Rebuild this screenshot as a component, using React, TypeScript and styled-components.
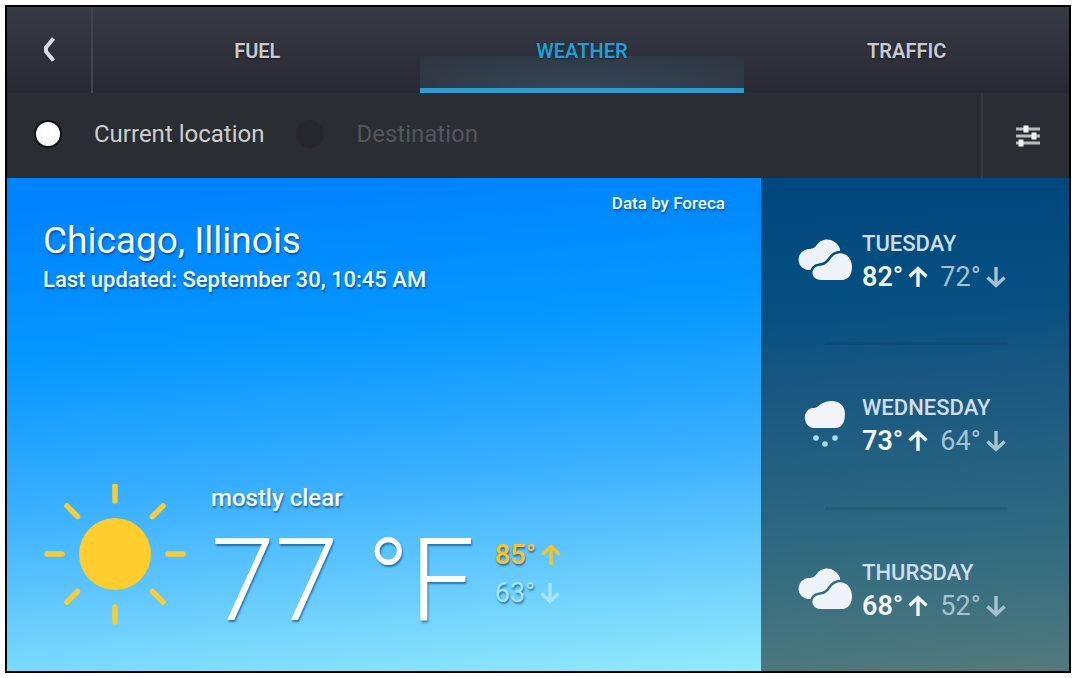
import React from "react";
import styled, { createGlobalStyle } from "styled-components";

const GlobalStyle = createGlobalStyle`
  *, *::before, *::after { box-sizing: border-box; }
  body {
    margin: 0;
    background: #fff;
    font-family: Roboto, "Liberation Sans", sans-serif;
  }
  h1, h2, p, ul { margin: 0; padding: 0; font-weight: inherit; }
  button { font: inherit; border: 0; padding: 0; background: none; cursor: pointer; }
`;

const Page = styled.div`
  display: flex;
  min-height: 100vh;
  padding: 5px 7px 5px 5px;
`;

const Screen = styled.div`
  flex: 1;
  display: flex;
  flex-direction: column;
  border: 2px solid #000;
  background: #2a2d31;
`;

const TopBar = styled.header`
  display: flex;
  height: 86px;
  background: linear-gradient(#363a44, #2c2d38 75%, #272932);
`;

const BackButton = styled.button`
  width: 86px;
  display: grid;
  place-items: center;
  border-right: 2px solid #42444e;
`;

const Tabs = styled.nav`
  flex: 1;
  display: grid;
  grid-template-columns: repeat(3, 1fr);
  padding-left: 2px;
`;

const Tab = styled.button<{ $active?: boolean }>`
  font-size: 20px;
  font-weight: 600;
  line-height: 24px;
  color: ${(p) => (p.$active ? "#1f9fd6" : "#c9cad0")};
  text-shadow: 0 1px 2px rgba(0, 0, 0, 0.5);
  border-top: 6px solid transparent;
  border-bottom: 5px solid ${(p) => (p.$active ? "#2f9bcb" : "transparent")};
  background: ${(p) =>
    p.$active
      ? "radial-gradient(ellipse 75% 130% at 50% 100%, #344858, rgba(52, 72, 88, 0.2)) bottom / 100% 32px no-repeat"
      : "none"};
`;

const FilterBar = styled.div`
  display: flex;
  height: 85px;
  background: #2a2d31;
`;

const Options = styled.div`
  flex: 1;
  display: flex;
  align-items: center;
  gap: 32px;
  padding: 0 27px 3px;
`;

const Option = styled.label<{ $muted?: boolean }>`
  display: flex;
  align-items: center;
  gap: 32px;
  font-size: 24px;
  line-height: 28px;
  color: ${(p) => (p.$muted ? "#53565a" : "#cdced0")};
`;

const Radio = styled.input`
  appearance: none;
  width: 28px;
  height: 28px;
  margin: 0;
  border-radius: 50%;
  border: 2px solid #27282e;
  background: #27282e;

  &:checked {
    border-color: #121316;
    background: #fff;
  }
`;

const SettingsButton = styled.button`
  width: 88px;
  display: grid;
  place-items: center;
  border-left: 2px solid #383a3f;
  padding-left: 4px;
`;

const Content = styled.main`
  flex: 1;
  display: flex;
`;

const Current = styled.section`
  flex: 1;
  display: flex;
  flex-direction: column;
  padding: 14px 36px 33px;
  color: #f4faff;
  text-shadow: 1px 2px 2px rgba(0, 50, 90, 0.55);
  background: linear-gradient(175deg, #0083ff 6%, #0496ff 32%, #36adff 58%, #6dcffc 82%, #92ebfb 100%);
`;

const Credit = styled.p`
  align-self: flex-end;
  font-size: 17px;
  font-weight: 500;
  line-height: 22px;
`;

const City = styled.h1`
  margin-top: 5px;
  font-size: 37px;
  line-height: 44px;
`;

const Updated = styled.p`
  margin-top: 3px;
  font-size: 22px;
  font-weight: 500;
  line-height: 28px;
`;

const Now = styled.div`
  display: flex;
  align-items: flex-start;
  gap: 20px;
  margin-top: auto;
`;

const Condition = styled.p`
  font-size: 24px;
  font-weight: 500;
  line-height: 28px;
`;

const Degrees = styled.p`
  margin-top: 11px;
  font-size: 115px;
  font-weight: 300;
  line-height: 115px;
  color: #fff;
  white-space: nowrap;
`;

const Range = styled.div`
  padding-top: 52px;
`;

const Reading = styled.span<{ $tone: string; $strong?: boolean }>`
  display: flex;
  align-items: center;
  gap: 5px;
  font-size: 27px;
  font-weight: ${(p) => (p.$strong ? 600 : 400)};
  line-height: 38px;
  color: ${(p) => p.$tone};
`;

const Forecast = styled.ul`
  width: 308px;
  display: grid;
  grid-template-rows: repeat(3, 1fr);
  list-style: none;
  background: linear-gradient(176deg, #00477d 5%, #065182 28%, #185681 40%, #286480 64%, #376e80 80%, #527a7c 100%);
`;

const Day = styled.li`
  display: grid;
  grid-template-columns: 54px 1fr;
  align-items: center;
  column-gap: 10px;
  padding: 0 60px 0 37px;

  & + & {
    background: linear-gradient(rgba(0, 40, 60, 0.14), rgba(0, 40, 60, 0.14)) 64px 0 / 182px 3px no-repeat;
  }
`;

const DayIcon = styled.span`
  display: grid;
  place-items: center;
`;

const DayText = styled.div`
  padding-top: 6px;
`;

const DayName = styled.h2`
  font-size: 22px;
  font-weight: 500;
  line-height: 28px;
  color: #cfdfe9;
`;

const DayTemps = styled.div`
  display: flex;
  gap: 12px;
`;

function ArrowIcon({ down }: { down?: boolean }) {
  return (
    <svg width="20" height="22" viewBox="0 0 20 22" fill="none" stroke="currentColor" strokeWidth="3.4" aria-hidden="true">
      {down ? <path d="M10 1v17M1.500 11.500 10 19.500l8.500-8" /> : <path d="M10 21V4M1.500 10.500 10 2.500l8.500 8" />}
    </svg>
  );
}

function SunIcon() {
  const angles = [0, 45, 90, 135, 180, 225, 270, 315];
  return (
    <svg width="148" height="144" viewBox="0 0 148 144" aria-hidden="true">
      <circle cx="72" cy="70" r="36" fill="#ffcd2e" />
      {angles.map((a) => (
        <path key={a} d="M72 2v15" stroke="#f6cd38" strokeWidth="5.500" strokeLinecap="round" transform={`rotate(${a} 72 70)`} />
      ))}
    </svg>
  );
}

function CloudsIcon({ id }: { id: string }) {
  const front = "M23 41C12 41 12 28 21 27C29 26 30 23 34 18C41 10 54 15 54 28C54 36 50 41 44 41Z";
  return (
    <svg width="55" height="42" viewBox="0 0 55 42" aria-hidden="true">
      <mask id={id}>
        <rect width="55" height="42" fill="#fff" />
        <path d={front} fill="#000" stroke="#000" strokeWidth="5" />
      </mask>
      <path
        d="M10 31C-3 29 -2 12 10 10C13 10 15 10 18 7C24 -3 38 -1 42 10L42 18L20 31Z"
        fill="#eef3f9"
        mask={`url(#${id})`}
      />
      <path d={front} fill="#f0f4fa" />
    </svg>
  );
}

function SnowCloudIcon() {
  return (
    <svg width="42" height="48" viewBox="0 0 42 48" aria-hidden="true">
      <path d="M10 28C-2 27-2 9 9 8C13 8 14 6 17 4C27-2 41 1 41 14C41 22 38 28 31 28Z" fill="#f2f4f8" />
      <g fill="#9fe0f2">
        <circle cx="12" cy="38" r="2.800" />
        <circle cx="21" cy="44" r="2.800" />
        <circle cx="31" cy="38" r="2.800" />
      </g>
    </svg>
  );
}

const days = [
  { name: "TUESDAY", high: 82, low: 72, snow: false },
  { name: "WEDNESDAY", high: 73, low: 64, snow: true },
  { name: "THURSDAY", high: 68, low: 52, snow: false },
];

export default function App() {
  return (
    <>
      <GlobalStyle />
      <Page>
        <Screen>
          <TopBar>
            <BackButton aria-label="Back">
              <svg width="14" height="26" viewBox="0 0 14 26" fill="none" stroke="#d9dbe6" strokeWidth="4" aria-hidden="true">
                <path d="M11.500 1.500 4 10.500v4l7.500 9" />
              </svg>
            </BackButton>
            <Tabs>
              <Tab>FUEL</Tab>
              <Tab $active aria-current="page">WEATHER</Tab>
              <Tab>TRAFFIC</Tab>
            </Tabs>
          </TopBar>
          <FilterBar>
            <Options>
              <Option>
                <Radio type="radio" name="place" defaultChecked />
                Current location
              </Option>
              <Option $muted>
                <Radio type="radio" name="place" disabled />
                Destination
              </Option>
            </Options>
            <SettingsButton aria-label="Settings">
              <svg width="26" height="24" viewBox="0 0 26 24" aria-hidden="true">
                <path d="M1 5h24M1 12h24M1 19h24" stroke="#b9bcc0" strokeWidth="3" />
                <path d="M11 1.500v7M19 8.500v7M6 15.500v7" stroke="#f2f3f4" strokeWidth="5" />
              </svg>
            </SettingsButton>
          </FilterBar>
          <Content>
            <Current>
              <Credit>Data by Foreca</Credit>
              <City>Chicago, Illinois</City>
              <Updated>Last updated: September 30, 10:45 AM</Updated>
              <Now>
                <SunIcon />
                <div>
                  <Condition>mostly clear</Condition>
                  <Degrees>77 °F</Degrees>
                </div>
                <Range>
                  <Reading $tone="#f7c22e" $strong>85°<ArrowIcon /></Reading>
                  <Reading $tone="#a4e6fa">63°<ArrowIcon down /></Reading>
                </Range>
              </Now>
            </Current>
            <Forecast>
              {days.map((d) => (
                <Day key={d.name}>
                  <DayIcon>{d.snow ? <SnowCloudIcon /> : <CloudsIcon id={`clouds-${d.name}`} />}</DayIcon>
                  <DayText>
                    <DayName>{d.name}</DayName>
                    <DayTemps>
                      <Reading $tone="#f0f6fa" $strong>{d.high}°<ArrowIcon /></Reading>
                      <Reading $tone="#a5c2d2">{d.low}°<ArrowIcon down /></Reading>
                    </DayTemps>
                  </DayText>
                </Day>
              ))}
            </Forecast>
          </Content>
        </Screen>
      </Page>
    </>
  );
}
